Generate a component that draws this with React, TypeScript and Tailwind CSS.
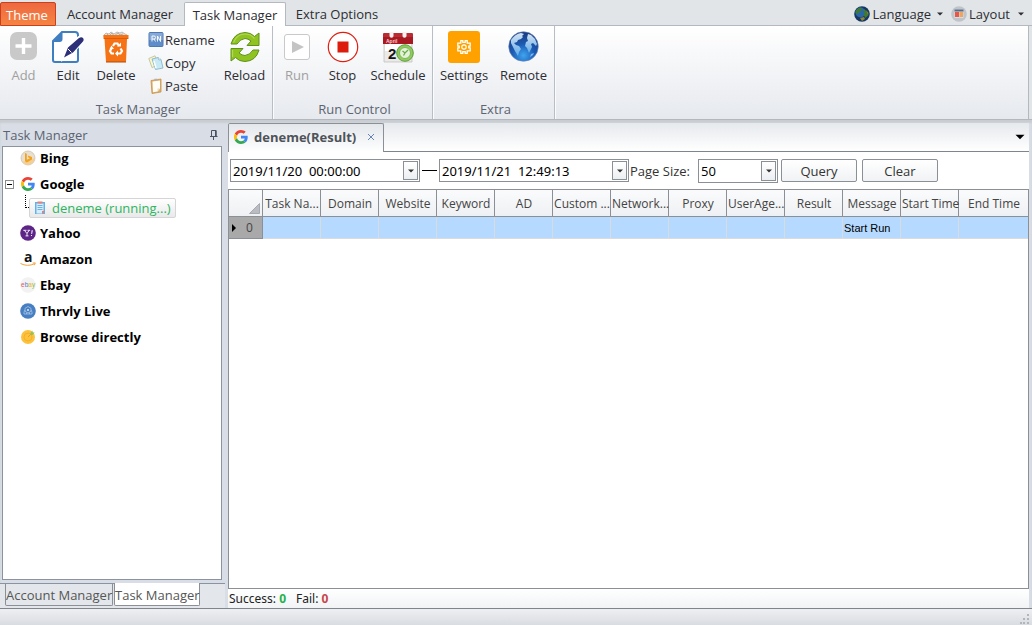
import React from 'react';

type IconProps = { className?: string };

function AddIcon() {
  return (
    <svg viewBox="0 0 32 32" className="size-8" aria-hidden="true">
      <rect x="2" y="1" width="27" height="28" rx="7" fill="#c9c9c9" />
      <path d="M15.500 7v16M7.500 15h16" stroke="#fff" strokeWidth="3.400" />
    </svg>
  );
}

function EditIcon() {
  return (
    <svg viewBox="0 0 32 32" className="size-8" aria-hidden="true">
      <path d="M1 10 10 1h13q3 0 3 3v25q0 2-2 2H3q-2 0-2-2z" fill="#fff" stroke="#3f7fc0" strokeWidth="2" />
      <path d="M1 11 10.500 0v8q0 3-3 3z" fill="#3f7fc0" />
      <path d="M12 27l3.500-9.500L27 6.500q2.500-1.500 4 0 1.500 2-.5 4L20 21.500z" fill="#fff" stroke="#fff" strokeWidth="3" />
      <path d="M12 26.500l4-10L27 7q2.500-1.500 4 0 1.500 2-.5 4L21 21.500z" fill="#2d2f78" />
      <path d="M16 18l3.500 3.500" stroke="#fff" strokeWidth="1" />
    </svg>
  );
}

function DeleteIcon() {
  return (
    <svg viewBox="0 0 32 32" className="size-8" aria-hidden="true">
      <path d="M4 4l2-2 3 1 2-2 3 2 3-2 3 1 2-1 3 2 2 1v2H4z" fill="#e4e2df" stroke="#a9a39c" strokeWidth=".7" />
      <path d="M7 3l2 2 3-3 2 3 4-3 2 2 3-1" fill="none" stroke="#9b9b9b" strokeWidth=".7" />
      <path d="M3.500 4h25v4h-1.500l-1 23H6L4.500 8h-1z" fill="#f57314" />
      <path d="M4 7.500h24" stroke="#e05c0b" strokeWidth="1" />
      <path d="M6 31h20" stroke="#b34a0c" strokeWidth="1" />
      <g fill="none" stroke="#fff" strokeWidth="2.200">
        <path d="M13 15l1.500-2.500h3L19 15" />
        <path d="M20.500 17.500l1.500 2.500-1.500 2.500h-3" />
        <path d="M14 22.500h-2.500L10 20l1.500-2.500" />
      </g>
      <path d="M17 15.500h4v-4zM18 19.500l-3 3 3 3zM9.500 18l2-3.500 2.500 3.500z" fill="#fff" />
    </svg>
  );
}

function RenameIcon() {
  return (
    <svg viewBox="0 0 16 16" className="size-4 shrink-0" aria-hidden="true">
      <rect x="1" y=".5" width="14" height="14" rx="1" fill="#5e8dca" stroke="#5079b2" />
      <path d="M1.500 1h13v7h-13z" fill="#86a9d8" />
      <path d="M4 9.500V4h2q1.500 0 1.500 1.500T6 7H4M6 7l1.500 2.500M9.500 9.500V4l3 5.500V4" fill="none" stroke="#fff" strokeWidth=".9" />
    </svg>
  );
}

function CopyIcon() {
  return (
    <svg viewBox="0 0 16 16" className="size-4 shrink-0" aria-hidden="true">
      <path d="M.8 3.500 7 .8l3.500 9L4 12.500z" fill="#fbf7cf" stroke="#b9bc91" strokeWidth=".8" />
      <path d="M4 4l6-1.500 3 2L15 13l-7.500 1.500z" fill="#c8eaf5" stroke="#7fb0c4" strokeWidth=".8" />
      <path d="M10 2.500l.8 2.500 2.400-.4" fill="#fff" stroke="#7fb0c4" strokeWidth=".7" />
      <path d="M6 6l2 7" stroke="#fff" strokeWidth="1.500" />
    </svg>
  );
}

function PasteIcon() {
  return (
    <svg viewBox="0 0 16 16" className="size-4 shrink-0" aria-hidden="true">
      <path d="M3 2.500 13 1v13l-9 1.500z" fill="#e0ae66" stroke="#c4924f" strokeWidth=".8" />
      <path d="M4.500 3.500 12 2.500v8l-2.500 3-4.500.7z" fill="#fffdf6" />
      <path d="M9.500 13.500v-3l2.500-.2z" fill="#e8dcc1" />
      <path d="M6 2.800 6.500.8h3l.5 1.500z" fill="#b9b1a3" />
    </svg>
  );
}

function ReloadIcon() {
  return (
    <svg viewBox="0 0 32 32" className="size-8" aria-hidden="true">
      <g fill="#8fc31f" stroke="#61901b" strokeWidth="1" strokeLinejoin="round">
        <path d="M2 13Q5 2 16 1.500q6 0 9.500 4L30 2v12.500H18l4-4.500q-3-2.500-6-2.500-5 .5-8 5.500z" />
        <path d="M30 19q-3 11-14 11.500-6 0-9.500-4L2 30V17.500h12L10 22q3 2.500 6 2.500 5-.5 8-5.500z" />
      </g>
      <path d="M4.500 11.500Q8 3 16 3q6 0 9.500 4.500M3.500 19v7" fill="none" stroke="#b4d957" strokeWidth="1.200" />
    </svg>
  );
}

function RunIcon() {
  return (
    <svg viewBox="0 0 32 32" className="size-8" aria-hidden="true">
      <rect x="3.500" y="3.500" width="25" height="25" rx="2.500" fill="#fff" stroke="#c9c9c9" />
      <path d="M11 10v12l12-6z" fill="#c4c4c4" />
    </svg>
  );
}

function StopIcon() {
  return (
    <svg viewBox="0 0 32 32" className="size-8" aria-hidden="true">
      <circle cx="16" cy="16" r="14.700" fill="#fff" stroke="#df1f13" strokeWidth="1.200" />
      <path d="M10.500 10.500h11v11h-11z" fill="#dc1c0c" />
    </svg>
  );
}

function ScheduleIcon() {
  return (
    <svg viewBox="0 0 32 32" className="size-8" aria-hidden="true">
      <path d="M2 11h28v20H2z" fill="#eceae8" stroke="#bdbab7" strokeWidth=".7" />
      <path d="M3 13h26v7H3z" fill="#fff" />
      <path d="M1 3.500q0-1.500 1.500-1.500h27Q31 2 31 3.500V13H1z" fill="#a91921" />
      <path d="M1 3.500Q1 2 2.500 2h27Q31 2 31 3.500V6H1z" fill="#b92d32" />
      <path d="M7.500 1h4v4q0 1.800-2 1.800t-2-1.800zM20.500 1h4v4q0 1.800-2 1.800t-2-1.800z" fill="#f5f1f0" />
      <text x="4" y="12" fontSize="5" fontWeight="700" fill="#f3cfd0" fontFamily="Liberation Sans">April</text>
      <text x="6" y="27.500" fontSize="15" fontWeight="700" fill="#151515" fontFamily="Liberation Sans">2</text>
      <circle cx="23" cy="22" r="8.300" fill="#8fcb60" stroke="#5da038" strokeWidth="1" />
      <circle cx="23" cy="22" r="5.500" fill="#e3f2d8" stroke="#7cba55" strokeWidth="1" />
      <path d="M20.500 20l2.500 2 3-3M23 22l-1.500 2.500" fill="none" stroke="#6aab4b" strokeWidth="1.300" />
    </svg>
  );
}

function SettingsIcon() {
  return (
    <svg viewBox="0 0 32 32" className="size-8" aria-hidden="true">
      <rect width="32" height="32" rx="3" fill="#ffa200" />
      <path
        d="M12.800 9.700h2v1.600h2.400V9.700h2v2.400h3v3.100h-1.400v1.600h1.400v3.100h-3v2.400h-2v-1.600h-2.400v1.600h-2v-2.400h-3v-3.100h1.400v-1.600H9.800v-3.100h3z"
        fill="none"
        stroke="#fff"
        strokeWidth="1.300"
      />
      <circle cx="16" cy="16" r="2.200" fill="none" stroke="#fff" strokeWidth="1.200" />
    </svg>
  );
}

function RemoteIcon() {
  return (
    <svg viewBox="0 0 32 32" className="size-8" aria-hidden="true">
      <defs>
        <radialGradient id="remote-sea" cx=".5" cy=".8" r=".75">
          <stop offset="0" stopColor="#3fa4f0" />
          <stop offset=".5" stopColor="#1c5cb4" />
          <stop offset="1" stopColor="#1b3c84" />
        </radialGradient>
        <linearGradient id="remote-land" x1="0" y1="0" x2="0" y2="1">
          <stop offset="0" stopColor="#d3e2f2" />
          <stop offset="1" stopColor="#62abe9" />
        </linearGradient>
      </defs>
      <circle cx="15.500" cy="15.500" r="14.800" fill="url(#remote-sea)" stroke="#6b89b9" strokeWidth=".6" />
      <path d="M3 9Q7 3 13 2l3 1-2 2 1 1-2 2-3 1-1 2-3 1 2 2 3 1 2 3-2 3-1 4-3-5-2-4-2-4z" fill="url(#remote-land)" />
      <path d="M20 3l3 1 4 4 2 5-1 2-3-3-2 1 1 3-2 4-1 2-2-5-2-2 1-4 2-1-1-3z" fill="url(#remote-land)" />
      <path d="M23 23l3-1-1 2-3 2z" fill="#78b8ee" />
    </svg>
  );
}

function LanguageIcon() {
  return (
    <svg viewBox="0 0 16 16" className="size-4" aria-hidden="true">
      <circle cx="8" cy="8" r="7.800" fill="#173662" />
      <circle cx="6.500" cy="6.500" r="5" fill="#2a66ac" />
      <path d="M1.500 5l4-3.500L8 2 7 5 5 7l-3 1zM10 3l3.500 3 1 3-3 3-2-3 1-3-1.500-1z" fill="#3f7a34" />
      <path d="M12 4l2.500 3-.5 2zM6 12l4-1 1 2-3 2z" fill="#8e8838" />
    </svg>
  );
}

function LayoutIcon() {
  return (
    <svg viewBox="0 0 16 16" className="size-4" aria-hidden="true">
      <circle cx="8" cy="8" r="7.800" fill="#bfc4ca" />
      <path d="M3.500 3.500h9V12h-9z" fill="#d7dce2" />
      <path d="M3.500 3.500h9v2h-9z" fill="#5b6b80" />
      <path d="M4 6h4v5H4z" fill="#e8564b" />
      <path d="M8.500 6H12v5H8.500z" fill="#f0a55f" />
    </svg>
  );
}

function GoogleIcon({ className }: IconProps) {
  return (
    <svg viewBox="0 0 48 48" className={className} aria-hidden="true">
      <path fill="#EA4335" d="M24 9.500c3.540 0 6.710 1.220 9.210 3.600l6.850-6.850C35.900 2.380 30.470 0 24 0 14.620 0 6.510 5.380 2.560 13.220l7.980 6.190C12.430 13.720 17.740 9.500 24 9.500z" />
      <path fill="#4285F4" d="M46.980 24.550c0-1.570-.15-3.090-.38-4.550H24v9.020h12.940c-.58 2.960-2.260 5.480-4.780 7.180l7.730 6c4.510-4.180 7.090-10.360 7.090-17.650z" />
      <path fill="#FBBC05" d="M10.530 28.590c-.48-1.450-.76-2.990-.76-4.590s.27-3.140.76-4.590l-7.980-6.190C.92 16.460 0 20.120 0 24s.92 7.540 2.560 10.780l7.970-6.190z" />
      <path fill="#34A853" d="M24 48c6.480 0 11.930-2.130 15.890-5.810l-7.730-6c-2.150 1.450-4.920 2.300-8.160 2.300-6.260 0-11.570-4.220-13.470-9.910l-7.980 6.190C6.510 42.620 14.620 48 24 48z" />
    </svg>
  );
}

function BingIcon() {
  return (
    <svg viewBox="0 0 16 16" className="size-4" aria-hidden="true">
      <circle cx="8" cy="8" r="7" fill="#e9dfd0" stroke="#c9bca9" strokeWidth=".7" />
      <path d="M2 11.500q3 4.500 8 3 5-2 4.500-7Q10 12 2 11.500z" fill="#f3cf95" />
      <path d="M5 3 6.800 3.700v6L10 8.200l-1.600-.8-.7-1.800L12 7v2.400l-5.200 3L5 11.200z" fill="#f2a21c" />
    </svg>
  );
}

function YahooIcon() {
  return (
    <svg viewBox="0 0 16 16" className="size-4" aria-hidden="true">
      <circle cx="8" cy="8" r="7.800" fill="#5d2587" />
      <path d="M3.300 5.300h3.200M7.500 5.300h2.600M4.500 5.500 7 8.500l2-3M7 8.500v2.300M5.500 10.900h3" fill="none" stroke="#fff" strokeWidth=".9" />
      <path d="M11.600 5.200h1.200l-.7 3.800h-.8zM11 10h1v1h-1z" fill="#fff" />
    </svg>
  );
}

function AmazonIcon() {
  return (
    <svg viewBox="0 0 16 16" className="size-4 overflow-visible" aria-hidden="true">
      <text x="4" y="10.500" fontFamily="Open Sans" fontWeight="700" fontSize="14" fill="#171717">a</text>
      <path d="M.5 12.500q7 3.500 14 .3M12.700 12l2.600-.1-.9 2.300" fill="none" stroke="#f4a43a" strokeWidth="1" />
    </svg>
  );
}

function EbayIcon() {
  return (
    <svg viewBox="0 0 16 16" className="size-4" aria-hidden="true">
      <circle cx="8" cy="8" r="7.800" fill="#f2f2f2" />
      <text x="1" y="9.500" fontFamily="Liberation Sans" fontSize="6.500">
        <tspan fill="#e0555c">e</tspan>
        <tspan fill="#4f7ec5">b</tspan>
        <tspan fill="#e9b52e">a</tspan>
        <tspan fill="#8cb83a">y</tspan>
      </text>
    </svg>
  );
}

function ThrvlyIcon() {
  return (
    <svg viewBox="0 0 16 16" className="size-4" aria-hidden="true">
      <circle cx="8" cy="8" r="7.800" fill="#477fc3" />
      <path d="M8 3.500l3 1.800v3L8 10 5 8.300v-3zM5 7l-1 2v2h8V9l-1-2M6.500 11V9.500M9.500 11V9.500" fill="none" stroke="#b3cdea" strokeWidth=".7" />
      <circle cx="8" cy="7" r="1" fill="#dce9f7" />
    </svg>
  );
}

function BrowseIcon() {
  return (
    <svg viewBox="0 0 16 16" className="size-4" aria-hidden="true">
      <circle cx="8" cy="8" r="7" fill="#fdc23a" />
      <circle cx="8" cy="8" r="4" fill="none" stroke="#f0a92c" strokeWidth=".8" />
      <path d="M8 8l4-4" stroke="#e39b24" strokeWidth=".8" />
      <path d="M10.500 4 12.500 1.500v2h2.200L12.500 6h-2z" fill="#8cc465" />
    </svg>
  );
}

function ClipboardIcon() {
  return (
    <svg viewBox="0 0 16 16" className="size-4" aria-hidden="true">
      <path d="M3 2h10v12H3z" fill="#64b2e5" />
      <path d="M4.500 3.500h7V12L10 13.500H4.500z" fill="#d7edfb" />
      <path d="M5.500 1.500h5v2h-5zM10 14v-3h3z" fill="#ef7c6e" />
      <path d="M5.500 5.500h5M5.500 7.500h5M5.500 9.500h5" stroke="#5faadf" strokeWidth=".9" />
    </svg>
  );
}

function PinIcon() {
  return (
    <svg viewBox="0 0 10 10" className="size-2.5" aria-hidden="true">
      <path d="M2.500 6V.5h4.500V6M1 6.500h7.500M4.500 6.500V10" fill="none" stroke="#4a5364" />
      <path d="M6 .5h1.500V6H6z" fill="#4a5364" />
    </svg>
  );
}

function Arrow({ className }: IconProps) {
  return (
    <svg viewBox="0 0 6 4" className={className} aria-hidden="true">
      <path d="M0 .5h6L3 3.500z" fill="currentColor" />
    </svg>
  );
}

type ToolProps = { icon: React.ReactNode; label: string; width: string; disabled?: boolean };

function Tool({ icon, label, width, disabled }: ToolProps) {
  return (
    <button
      type="button"
      disabled={disabled}
      className={`flex flex-col items-center gap-0.5 pt-[5px] leading-5 text-[#2d2d33] disabled:text-[#a0a0a0] ${width}`}
    >
      {icon}
      <span>{label}</span>
    </button>
  );
}

function SmallTool({ icon, label }: { icon: React.ReactNode; label: string }) {
  return (
    <button type="button" className="flex h-[23px] items-center gap-px text-[#2d2d33]">
      {icon}
      {label}
    </button>
  );
}

function Group({ title, children }: { title: string; children: React.ReactNode }) {
  return (
    <section
      aria-label={title}
      className="flex flex-col justify-between border-r border-[#b9bec6] pb-px shadow-[1px_0_0_#fbfcfd]"
    >
      <div className="flex px-px">{children}</div>
      <div className="pl-1 text-center leading-[18px] text-[#5d6470]">{title}</div>
    </section>
  );
}

function DateField({ label, value }: { label: string; value: string }) {
  return (
    <div className="flex h-[23px] w-[190px] items-stretch border border-[#8b9097] bg-white p-px">
      <input
        aria-label={label}
        defaultValue={value}
        className="min-w-0 flex-1 whitespace-pre pl-px font-['Noto_Sans',sans-serif] text-black outline-none"
      />
      <button
        type="button"
        aria-label={`Open ${label}`}
        className="flex w-[15px] items-center justify-center border border-[#8b9097] bg-linear-to-b from-white to-[#eceff2] text-[#333]"
      >
        <Arrow className="h-1 w-1.5" />
      </button>
    </div>
  );
}

const sites = [
  { name: 'Bing', icon: <BingIcon /> },
  { name: 'Google', icon: <GoogleIcon className="size-3.5" />, task: 'deneme (running...)' },
  { name: 'Yahoo', icon: <YahooIcon /> },
  { name: 'Amazon', icon: <AmazonIcon /> },
  { name: 'Ebay', icon: <EbayIcon /> },
  { name: 'Thrvly Live', icon: <ThrvlyIcon /> },
  { name: 'Browse directly', icon: <BrowseIcon /> },
];

const columns = [
  'Task Na...', 'Domain', 'Website', 'Keyword', 'AD', 'Custom ...', 'Network...',
  'Proxy', 'UserAge...', 'Result', 'Message', 'Start Time', 'End Time',
];

function Ribbon() {
  return (
    <header>
      <nav className="flex h-[26px] items-stretch bg-[#e1e5e8] pt-0.5 text-[#2d2d33]">
        <button
          type="button"
          className="w-14 rounded-t-xs border border-[#c8401c] bg-linear-to-b from-[#ee6840] to-[#f58443] pt-px pr-0.5 text-white"
        >
          Theme
        </button>
        <div className="flex flex-1 items-stretch border-b border-[#b4b9c1]">
          <button type="button" className="w-32 pt-px">Account Manager</button>
          <button
            type="button"
            className="-mb-px w-[102px] rounded-t-xs border border-b-0 border-[#b4b9c1] bg-white"
          >
            Task Manager
          </button>
          <button type="button" className="w-[102px] pt-px">Extra Options</button>
          <div className="ml-auto flex items-center pr-2">
            <button type="button" className="flex items-center gap-0.5">
              <LanguageIcon />
              Language
              <Arrow className="ml-1 h-1 w-1.5" />
            </button>
            <button type="button" className="ml-2 flex items-center gap-0.5">
              <LayoutIcon />
              Layout
              <Arrow className="ml-1.5 h-1 w-1.5" />
            </button>
          </div>
        </div>
      </nav>
      <div className="bg-[#e1e5e8] pr-[3px]">
        <div className="flex h-[93px] border-r border-[#b4b9c1] bg-linear-to-b from-white to-[#e6e9ee]">
          <Group title="Task Manager">
            <Tool icon={<AddIcon />} label="Add" width="w-[45px]" disabled />
            <Tool icon={<EditIcon />} label="Edit" width="w-11" />
            <Tool icon={<DeleteIcon />} label="Delete" width="w-13" />
            <div className="flex w-[76px] flex-col items-start pt-0.5 pl-1.5">
              <SmallTool icon={<RenameIcon />} label="Rename" />
              <SmallTool icon={<CopyIcon />} label="Copy" />
              <SmallTool icon={<PasteIcon />} label="Paste" />
            </div>
            <Tool icon={<ReloadIcon />} label="Reload" width="w-[53px]" />
          </Group>
          <Group title="Run Control">
            <Tool icon={<RunIcon />} label="Run" width="w-[46px]" disabled />
            <Tool icon={<StopIcon />} label="Stop" width="w-[45px]" />
            <Tool icon={<ScheduleIcon />} label="Schedule" width="w-[66px]" />
          </Group>
          <Group title="Extra">
            <Tool icon={<SettingsIcon />} label="Settings" width="w-[60px]" />
            <Tool icon={<RemoteIcon />} label="Remote" width="w-[59px]" />
          </Group>
        </div>
      </div>
    </header>
  );
}

function Sidebar() {
  return (
    <aside className="flex w-[225px] shrink-0 flex-col">
      <div className="flex h-[23px] items-center justify-between pr-1.5 pl-[3px] text-[#5a6372]">
        <h2>Task Manager</h2>
        <button type="button" aria-label="Pin panel">
          <PinIcon />
        </button>
      </div>
      <ul className="mr-[3px] ml-0.5 flex flex-1 flex-col gap-1 border border-[#8b93a0] bg-white">
        {sites.map((site) => (
          <li key={site.name}>
            <div className="flex h-[22px] items-center">
              <span className="flex w-[17px] pl-0.5">
                {site.task && (
                  <button
                    type="button"
                    aria-label="Collapse"
                    className="flex size-[9px] items-center justify-center border border-[#8a8a8a] bg-white"
                  >
                    <span className="h-px w-[5px] bg-black" />
                  </button>
                )}
              </span>
              <span className="flex size-4 items-center justify-center">{site.icon}</span>
              <span className="ml-1 font-bold text-black">{site.name}</span>
            </div>
            {site.task && (
              <div className="flex h-[23px] pl-[22px]">
                <span className="h-[13px] w-1 border-b border-l border-dotted border-black" />
                <span className="mt-[3px] flex h-5 items-center gap-1 rounded-xs border border-[#d5d5d5] bg-linear-to-b from-white to-[#e9e9ea] pr-1 pl-0.5 whitespace-nowrap text-[#2fb45f]">
                  <ClipboardIcon />
                  {site.task}
                </span>
              </div>
            )}
          </li>
        ))}
      </ul>
      <div className="mt-[3px] flex h-[25px] border-t border-[#8b93a0] bg-[#e3e6eb] pl-[5px] text-[#565656]">
        <button
          type="button"
          className="h-[22px] w-[108px] rounded-b-xs border border-t-0 border-[#8b9097] whitespace-nowrap"
        >
          Account Manager
        </button>
        <button
          type="button"
          className="-mt-px ml-px h-[23px] w-[86px] rounded-b-xs border border-t-0 border-[#8b9097] bg-white pt-px whitespace-nowrap"
        >
          Task Manager
        </button>
      </div>
    </aside>
  );
}

function Results() {
  return (
    <main className="mr-[3px] ml-[3px] flex min-w-0 flex-1 flex-col bg-white">
      <div className="flex h-[29px] items-stretch border-b border-[#7e858f] bg-linear-to-b from-[#e6e9ed] to-white">
        <div className="-mb-px flex w-[156px] items-center rounded-t-xs border border-b-0 border-[#8b9097] bg-linear-to-b from-[#e3e7eb] to-white pr-2 pb-0.5 pl-[5px]">
          <GoogleIcon className="size-3.5" />
          <span className="ml-1.5 font-bold text-[#4e5359]">deneme(Result)</span>
          <button type="button" aria-label="Close tab" className="ml-auto">
            <svg viewBox="0 0 8 8" className="size-2" aria-hidden="true">
              <path d="M1 1l6 6M7 1 1 7" stroke="#6484b2" />
            </svg>
          </button>
        </div>
        <button type="button" aria-label="Tab list" className="mr-1 ml-auto text-black">
          <Arrow className="h-1.5 w-2.5" />
        </button>
      </div>
      <div className="flex h-[37px] items-center pl-0.5">
        <DateField label="start date" value="2019/11/20  00:00:00" />
        <span className="mx-px h-px w-[17px] border-x border-white bg-black" />
        <DateField label="end date" value="2019/11/21  12:49:13" />
        <label htmlFor="page-size" className="w-[69px] pl-px text-[#333]">Page Size:</label>
        <div className="relative h-6 w-20 border border-[#8b9097] bg-white p-px">
          <select id="page-size" defaultValue="50" className="h-full w-full appearance-none pl-px text-black outline-none">
            <option>50</option>
            <option>100</option>
          </select>
          <span className="pointer-events-none absolute inset-y-px right-px flex w-[15px] items-center justify-center border border-[#8b9097] bg-linear-to-b from-white to-[#eceff2] text-[#333]">
            <Arrow className="h-1 w-1.5" />
          </span>
        </div>
        <button type="button" className="ml-[3px] h-[23px] w-19 rounded-xs border border-[#8b9097] bg-linear-to-b from-white to-[#f0f2f4] text-[#333]">
          Query
        </button>
        <button type="button" className="ml-[5px] h-[23px] w-19 rounded-xs border border-[#8b9097] bg-linear-to-b from-white to-[#f0f2f4] text-[#333]">
          Clear
        </button>
      </div>
      <div className="flex-1 border border-[#8b9097] bg-white">
        <table className="w-full table-fixed border-separate border-spacing-0">
          <colgroup>
            <col className="w-[34px]" />
            {columns.map((name) => (
              <col key={name} className={name === 'End Time' ? '' : 'w-[58px]'} />
            ))}
          </colgroup>
          <thead>
            <tr className="h-[27px] bg-linear-to-b from-[#fbfbfc] to-[#edf0f3]">
              <th aria-label="Row" className="border-r border-b border-[#8b9097] p-0">
                <svg viewBox="0 0 11 11" className="mt-2.5 mr-0.5 ml-auto size-[11px]" aria-hidden="true">
                  <path d="M10.500.5v10H.5z" fill="#b9bdc1" stroke="#92979d" strokeWidth=".7" />
                </svg>
              </th>
              {columns.map((name) => (
                <th
                  key={name}
                  scope="col"
                  className="border-r border-b border-[#8b9097] pt-0.5 pr-0 pb-0 pl-px text-center text-[12px] font-normal whitespace-nowrap text-[#444] last:border-r-0"
                >
                  {name}
                </th>
              ))}
            </tr>
          </thead>
          <tbody>
            <tr className="h-[22px] bg-[#b6daff]">
              <th scope="row" className="border-r border-b border-[#8b9097] bg-[#a9a9a9] p-0 text-[12px] font-normal text-[#444]">
                <span className="flex items-center pl-[3px]">
                  <svg viewBox="0 0 4 8" className="h-2 w-1" aria-hidden="true">
                    <path d="M0 0v8l4-4z" fill="#000" />
                  </svg>
                  <span className="ml-2.5">0</span>
                </span>
              </th>
              {columns.map((name) => (
                <td
                  key={name}
                  className="border-r border-b border-[#d9dcdf] p-0 pl-px font-['Liberation_Sans',sans-serif] text-[11px] whitespace-nowrap text-black last:border-r-0"
                >
                  {name === 'Message' ? 'Start Run' : ''}
                </td>
              ))}
            </tr>
          </tbody>
        </table>
      </div>
      <div className="flex h-[19px] items-center gap-2.5 bg-linear-to-b from-white to-[#f1f3f5] pl-px font-['Noto_Sans',sans-serif] text-[12px] text-[#222]">
        <span>Success: <b className="text-[#22b14c]">0</b></span>
        <span>Fail: <b className="text-[#c8454a]">0</b></span>
      </div>
    </main>
  );
}

export default function App() {
  return (
    <div className="flex min-h-screen flex-col bg-[#d9dee6] font-['Open_Sans','Noto_Sans',sans-serif] text-[13px] leading-[18px]">
      <Ribbon />
      <div className="flex flex-1 border-t border-[#b4b8be] pt-[3px] shadow-[inset_0_3px_2px_#c9cdd2]">
        <Sidebar />
        <Results />
      </div>
      <footer className="flex h-[17px] items-end justify-end border-t border-[#80858d] bg-linear-to-b from-[#eeeff2] to-[#d9dce1]">
        <svg viewBox="0 0 12 12" className="size-3" aria-hidden="true">
          <path d="M7 1h2v2H7zM3 5h2v2H3zM7 5h2v2H7zM0 9h2v2H0zM3 9h2v2H3zM7 9h2v2H7z" fill="#b2b5ba" />
        </svg>
      </footer>
    </div>
  );
}
